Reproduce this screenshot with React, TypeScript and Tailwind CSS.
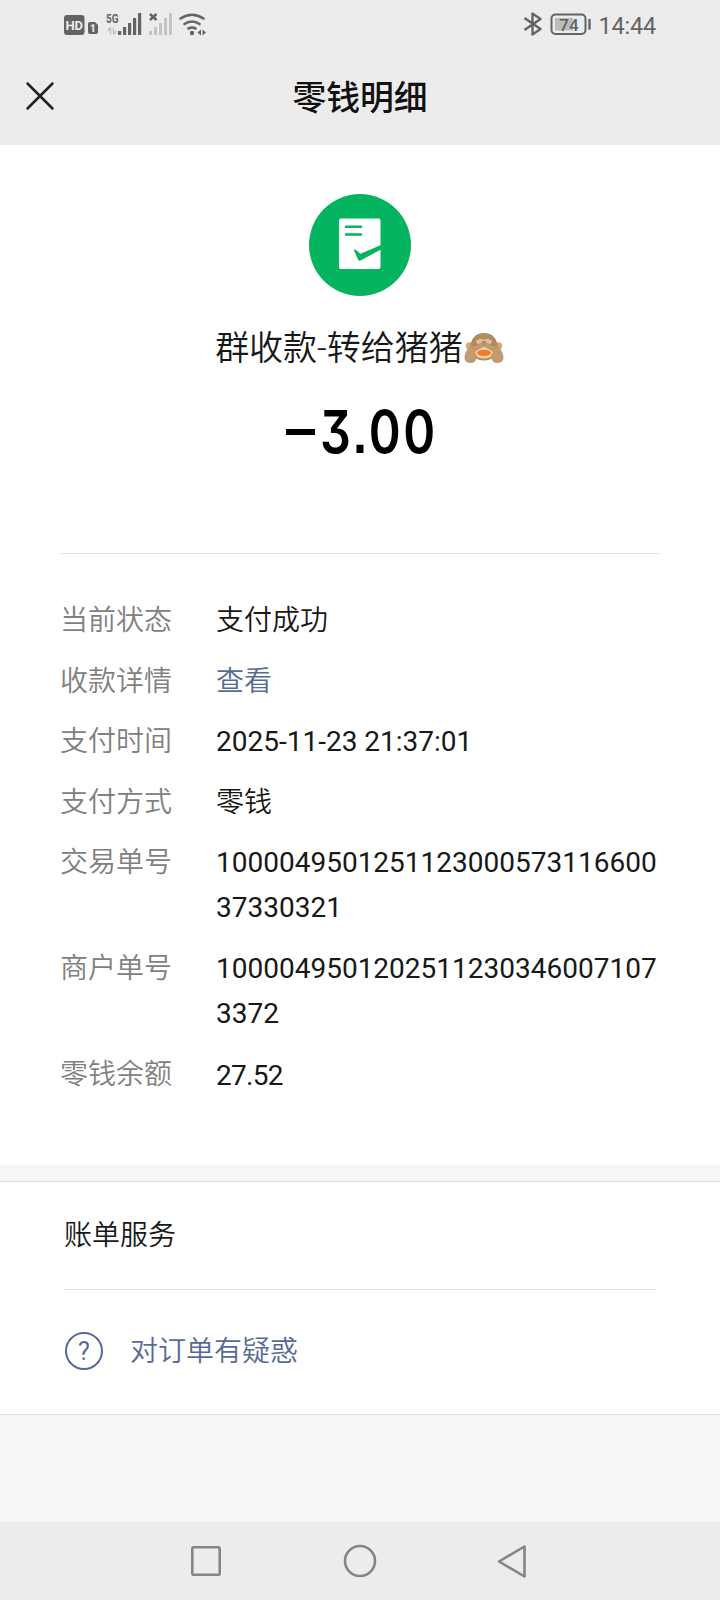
const details = [
  { label: "当前状态", lines: ["支付成功"] },
  { label: "收款详情", lines: ["查看"], style: "text-[#576b95] font-[350]" },
  { label: "支付时间", lines: ["2025-11-23 21:37:01"], style: "font-normal" },
  { label: "支付方式", lines: ["零钱"] },
  { label: "交易单号", lines: ["1000049501251123000573116600", "37330321"], style: "font-normal" },
  { label: "商户单号", lines: ["1000049501202511230346007107", "3372"], style: "font-normal" },
  { label: "零钱余额", lines: ["27.52"], style: "pt-px -mb-px tracking-[-0.7px]" },
];

function StatusBar() {
  return (
    <div className="flex h-12 items-center justify-between pr-[64px] pl-[62px] text-[#636363]">
      <svg width="150" height="48" viewBox="62 0 150 48" fill="currentColor">
        <rect x="64" y="15" width="20.500" height="20" rx="3" />
        <text x="74.200" y="29.500" textAnchor="middle" fontSize="13" fontWeight="700" fill="#ececec" fontFamily="Roboto, sans-serif">
          HD
        </text>
        <path d="M88 24q0-2 2-2h5l3 3v7q0 2-2 2h-6q-2 0-2-2z" />
        <text x="93" y="32" textAnchor="middle" fontSize="10" fontWeight="900" fill="#ececec" fontFamily="Roboto, sans-serif">
          1
        </text>
        <text x="106" y="22.500" fontSize="12.500" fontWeight="700" textLength="12.500" lengthAdjust="spacingAndGlyphs" fontFamily="Roboto, sans-serif">
          5G
        </text>
        <path d="M110.500 27.500v7M110 28l-2.500 3M113.500 34.500v-7M114 34l2.500-3" fill="none" stroke="#c2c2c2" strokeWidth="1.500" />
        <path d="M118 31h3.200v4h-3.200zM123 27h3.200v8h-3.200zM128 23h3.200v12h-3.200zM133 18h3.200v17h-3.200zM138 13h3.200v22h-3.200z" />
        <path d="M149 31h3v4h-3zM154 27h3v8h-3zM159 23h3v12h-3zM164 18h3v17h-3zM169 13h3v22h-3z" fill="#c4c4c4" />
        <path d="M150 14l6.500 6M156.500 14l-6.500 6" stroke="currentColor" strokeWidth="2.400" />
        <g fill="none" stroke="currentColor" strokeWidth="2.600" strokeLinecap="round">
          <path d="M180.500 18.500q11.500-7.500 23 0" />
          <path d="M184.500 24q7.500-5 15 0" />
          <path d="M188.500 28.500q3.500-2 7 0" />
        </g>
        <circle cx="192" cy="33" r="2.200" />
        <path d="M201 29.500v6l-3.500-3zM202.500 29.500v6l3.500-3z" />
      </svg>
      <div className="flex items-center">
        <svg width="74" height="48" viewBox="520 0 74 48" fill="none" stroke="currentColor" strokeWidth="2.400">
          <path d="M524.500 18l16 11-8 5.500v-21l8 5.500-16 11" strokeLinejoin="round" />
          <rect x="551.500" y="14.500" width="34" height="19.500" rx="4" strokeWidth="2" />
          <rect x="555" y="18" width="18" height="12.500" fill="#bcbcbc" stroke="none" />
          <path d="M589.500 19v10.500" />
          <text x="569" y="30.500" textAnchor="middle" fontSize="17" fontWeight="500" fill="currentColor" stroke="none" fontFamily="Roboto, sans-serif">
            74
          </text>
        </svg>
        <span className="mt-[3px] ml-1 text-[23.500px] leading-6 font-[450] tracking-[-0.2px]">14:44</span>
      </div>
    </div>
  );
}

function Header() {
  return (
    <header className="grid h-[97px] grid-cols-[80px_1fr_80px] items-center">
      <svg className="mb-px ml-6" width="32" height="32" viewBox="0 0 32 32" fill="none" stroke="#222" strokeWidth="2.500" strokeLinecap="round">
        <path d="M3.500 3.500l25 25M28.500 3.500l-25 25" />
      </svg>
      <h1 className="pt-[5px] text-center text-[33.800px] leading-none font-medium text-[#111]">零钱明细</h1>
    </header>
  );
}

function ReceiptIcon() {
  return (
    <svg width="102" height="102" viewBox="0 0 102 102">
      <circle cx="51" cy="51" r="51" fill="#05b45f" />
      <rect x="30" y="24.500" width="41.500" height="50.500" rx="2" fill="#fff" />
      <path d="M37 32.800h15M37 40.500h15" stroke="#05b45f" strokeWidth="2.600" strokeLinecap="round" />
      <path d="M45 56.500q.500-1.500 2-.5l4 3.500q.500.300 1 0L72 51v4.500L51.500 66.500q-1.500.800-2.200-.5z" fill="#05b45f" />
    </svg>
  );
}

function MonkeyEmoji() {
  return (
    <svg className="mr-px ml-px" width="40" height="32" viewBox="0 0 40 32" role="img" aria-label="🙈">
      <circle cx="5.500" cy="14" r="3.800" fill="#d7a878" />
      <circle cx="34.500" cy="14" r="3.800" fill="#d7a878" />
      <path d="M20 1C11.500 1 6.500 7 6.500 15c0 9 6 13.500 13.500 13.500S33.500 24 33.500 15C33.500 7 28.500 1 20 1z" fill="#b08a62" />
      <path d="M12 9q4-4 8-1 4-3 8 1l-2 5H14z" fill="#e3bd8f" />
      <ellipse cx="20" cy="20.500" rx="11" ry="6" fill="#f4cf98" />
      <ellipse cx="20" cy="20.800" rx="7" ry="3" fill="#f27a35" />
      <g fill="#c39a72" stroke="#a87f58" strokeWidth=".6">
        <path d="M1 26c0-6 3-9 7-12l11-3q2 1.500 0 3.500c-3 2.500-7 2.500-8.500 6 3 3 2 6 0 9-3 2-9.500 1.500-9.500-3.500z" />
        <path d="M39 26c0-6-3-9-7-12l-11-3q-2 1.500 0 3.500c3 2.500 7 2.500 8.500 6-3 3-2 6 0 9 3 2 9.500 1.500 9.500-3.500z" />
      </g>
      <path d="M18 9.500l2 1 2-1" fill="none" stroke="#7d5b3a" strokeWidth="1" />
    </svg>
  );
}

function NavigationBar() {
  return (
    <nav className="flex h-[78px] items-center justify-center bg-[#ececec]">
      <svg width="344" height="40" viewBox="188 0 344 40" fill="none" stroke="#858585" strokeWidth="2.600" strokeLinejoin="round">
        <rect x="192.300" y="6.300" width="27.400" height="27.400" rx="1.500" />
        <circle cx="360" cy="20" r="15" />
        <path d="M524.500 5.500v30L499 20.500z" />
      </svg>
    </nav>
  );
}

export default function App() {
  return (
    <main className="flex h-[1600px] w-[720px] flex-col overflow-hidden bg-[#f6f6f6] font-[Roboto,'Noto_Sans_CJK_SC',sans-serif] text-[#181818]">
      <div className="bg-[#ececec]">
        <StatusBar />
        <Header />
      </div>

      <section className="h-[1020px] bg-white px-[60px] pt-[49px]">
        <div className="flex flex-col items-center">
          <ReceiptIcon />
          <div className="mt-[28px] flex h-12 items-center text-[34px] leading-[48px] font-[350]">
            <span>群收款-转给猪猪</span>
            <MonkeyEmoji />
          </div>
          <div className="mt-[30px] flex h-[60px] w-[148px] items-center font-[Inter,sans-serif] text-[59px] leading-[60px] font-semibold text-black">
            <span className="mr-[5px] h-[6px] w-[29px] shrink-0 bg-black" />
            <span className="origin-left scale-x-[0.82] tracking-[3px] [font-feature-settings:'cv09','ss07']">3.00</span>
          </div>
        </div>

        <dl className="mt-[91px] flex flex-col gap-[15.600px] border-t border-[#e3e3e3] pt-[44px] text-[28px] leading-[45px]">
          {details.map((item) => (
            <div className="flex" key={item.label}>
              <dt className="w-[156px] shrink-0 font-[350] text-[#808080]">{item.label}</dt>
              <dd className={item.style ?? "font-[350]"}>
                {item.lines.map((line) => (
                  <div key={line}>{line}</div>
                ))}
              </dd>
            </div>
          ))}
        </dl>
      </section>

      <section className="mt-4 h-[234px] border-y border-[#e0e0e0] bg-white px-16 text-[28px] font-[350]">
        <h2 className="flex h-[108px] items-center border-b border-[#e3e3e3]">账单服务</h2>
        <a className="flex h-[124px] items-center text-[#576b95]">
          <svg width="40" height="40" viewBox="0 0 40 40" fill="none" stroke="currentColor" strokeWidth="2">
            <circle cx="20" cy="19" r="18" />
            <text x="20" y="28" textAnchor="middle" fontSize="25" fontWeight="400" fill="currentColor" stroke="none">
              ?
            </text>
          </svg>
          <span className="ml-[26px]">对订单有疑惑</span>
        </a>
      </section>

      <div className="flex-1" />
      <NavigationBar />
    </main>
  );
}
